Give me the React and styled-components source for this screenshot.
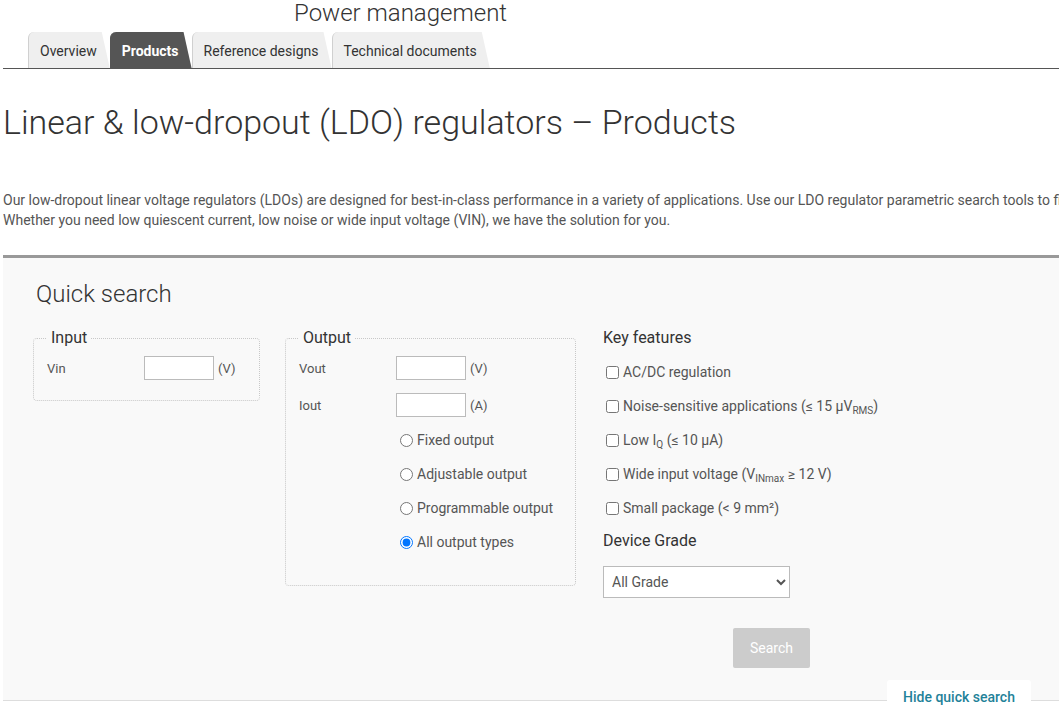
import styled, { createGlobalStyle } from "styled-components";

const Global = createGlobalStyle`
  html, body {
    margin: 0;
    padding: 0;
    background: #fff;
    font-family: Roboto, "Liberation Sans", Arial, sans-serif;
    overflow: hidden;
  }
`;

const tabs = ["Overview", "Products", "Reference designs", "Technical documents"];

const outputTypes = [
  "Fixed output",
  "Adjustable output",
  "Programmable output",
  "All output types",
];

const App = () => {
  return (
    <Page>
      <Global />
      <Family>Power management</Family>
      <Tabs>
        {tabs.map((t) => (
          <Tab key={t} active={t === "Products"}>
            {t}
          </Tab>
        ))}
      </Tabs>

      <Title>Linear &amp; low-dropout (LDO) regulators – Products</Title>

      <Intro>
        Our low-dropout linear voltage regulators (LDOs) are designed for
        best-in-class performance in a variety of applications. Use our LDO
        regulator parametric search tools to find the right device for your design.
        <br />
        Whether you need low quiescent current, low noise or wide input voltage
        (VIN), we have the solution for you.
      </Intro>

      <Panel>
        <PanelTitle>Quick search</PanelTitle>
        <Columns>
          <Group width={227} bottom={20}>
            <legend>Input</legend>
            <FieldRow>
              <FieldLabel>Vin</FieldLabel>
              <NumInput type="text" />
              <Unit>(V)</Unit>
            </FieldRow>
          </Group>

          <Group width={291} bottom={26} gapRight={27}>
            <legend>Output</legend>
            <FieldRow>
              <FieldLabel>Vout</FieldLabel>
              <NumInput type="text" />
              <Unit>(V)</Unit>
            </FieldRow>
            <FieldRow gap={13}>
              <FieldLabel>Iout</FieldLabel>
              <NumInput type="text" />
              <Unit>(A)</Unit>
            </FieldRow>
            <RadioList>
              {outputTypes.map((o) => (
                <Choice key={o}>
                  <input
                    type="radio"
                    name="otype"
                    defaultChecked={o === "All output types"}
                  />
                  <span>{o}</span>
                </Choice>
              ))}
            </RadioList>
          </Group>

          <Features>
            <Heading>Key features</Heading>
            <CheckList>
              <Choice>
                <input type="checkbox" />
                <span>AC/DC regulation</span>
              </Choice>
              <Choice>
                <input type="checkbox" />
                <span>
                  Noise-sensitive applications (≤ 15 μV<sub>RMS</sub>)
                </span>
              </Choice>
              <Choice>
                <input type="checkbox" />
                <span>
                  Low I<sub>Q</sub> (≤ 10 μA)
                </span>
              </Choice>
              <Choice>
                <input type="checkbox" />
                <span>
                  Wide input voltage (V<sub>INmax</sub> ≥ 12 V)
                </span>
              </Choice>
              <Choice>
                <input type="checkbox" />
                <span>Small package (&lt; 9 mm²)</span>
              </Choice>
            </CheckList>
            <Heading top={6}>Device Grade</Heading>
            <Select defaultValue="all">
              <option value="all">All Grade</option>
              <option value="auto">Automotive</option>
              <option value="cat">Catalog</option>
            </Select>
            <SearchButton>Search</SearchButton>
          </Features>
        </Columns>
        <HideTab>Hide quick search</HideTab>
      </Panel>
    </Page>
  );
};

export default App;

const Page = styled.div`
  width: 1056px;
  margin-left: 3px;
  padding-bottom: 25px;
  color: #333;
`;

const Family = styled.div`
  padding-left: 291px;
  font-size: 24px;
  font-weight: 300;
  line-height: 26px;
  color: #333;
`;

const Tabs = styled.div`
  display: flex;
  gap: 0;
  margin-top: 6px;
  padding-left: 25px;
  border-bottom: 1px solid #555;
`;

const Tab = styled.div`
  height: 36px;
  display: flex;
  align-items: center;
  padding: 2px 13px 0 11px;
  font-size: 14px;
  font-weight: ${(p) => (p.active ? 700 : 400)};
  color: ${(p) => (p.active ? "#fff" : "#333")};
  background: ${(p) => (p.active ? "#555" : "#efefef")};
  border-left: 1px solid ${(p) => (p.active ? "#555" : "#d0d0d0")};
  border-radius: 6px 8px 0 0;
  clip-path: polygon(0 0, calc(100% - 8px) 0, 100% 100%, 0 100%);
  box-sizing: border-box;
`;

const Title = styled.h1`
  margin: 33px 0 0;
  font-size: 34px;
  font-weight: 300;
  line-height: 40px;
  color: #333;
  white-space: nowrap;
`;

const Intro = styled.p`
  margin: 48px 0 0;
  font-size: 14px;
  line-height: 20px;
  color: #555;
  white-space: nowrap;
  overflow: hidden;
`;

const Panel = styled.div`
  position: relative;
  margin-top: 25px;
  background: #f9f9f9;
  border-top: 3px solid #999;
  border-bottom: 1px solid #ddd;
  padding: 22px 30px 33px;
  height: 446px;
  box-sizing: border-box;
`;

const PanelTitle = styled.h2`
  margin: 0 0 0 3px;
  font-size: 24px;
  font-weight: 300;
  line-height: 28px;
  color: #333;
`;

const Columns = styled.div`
  display: flex;
  align-items: flex-start;
  margin-top: 20px;
`;

const Group = styled.fieldset`
  width: ${(p) => p.width}px;
  box-sizing: border-box;
  margin: 0 ${(p) => p.gapRight || 25}px 0 0;
  padding: 8px 12px ${(p) => p.bottom}px 13px;
  border: 1px dotted #c8c8c8;
  border-radius: 4px;

  legend {
    padding: 0 4px;
    font-size: 16px;
    line-height: 20px;
    color: #333;
  }
`;

const FieldRow = styled.div`
  display: flex;
  align-items: center;
  margin-top: ${(p) => p.gap || 0}px;
  height: 24px;
`;

const FieldLabel = styled.label`
  width: 97px;
  font-size: 13px;
  color: #555;
`;

const NumInput = styled.input`
  width: 70px;
  height: 24px;
  box-sizing: border-box;
  border: 1px solid #bbb;
  background: #fff;
  margin: 0 4px 0 0;
  padding: 2px 4px;
  outline: none;
`;

const Unit = styled.span`
  font-size: 13px;
  color: #555;
`;

const RadioList = styled.div`
  display: flex;
  flex-direction: column;
  margin: 6px 0 0 98px;
`;

const Choice = styled.label`
  display: flex;
  align-items: center;
  height: 34px;
  font-size: 14px;
  color: #555;
  white-space: nowrap;

  input {
    width: 13px;
    height: 13px;
    margin: 0 4px 0 3px;
  }

  sub {
    font-size: 10px;
    vertical-align: -3px;
    line-height: 0;
  }
`;

const Features = styled.div`
  display: flex;
  flex-direction: column;
  align-items: flex-start;
  width: 336px;
`;

const Heading = styled.div`
  margin-top: ${(p) => p.top || 0}px;
  font-size: 16px;
  line-height: 20px;
  color: #333;
`;

const CheckList = styled.div`
  display: flex;
  flex-direction: column;
  margin-top: 7px;
`;

const Select = styled.select`
  margin-top: 15px;
  width: 187px;
  height: 32px;
  border: 1px solid #bbb;
  border-radius: 0;
  background: #fff;
  padding: 0 4px;
  font-family: Roboto, "Liberation Sans", Arial, sans-serif;
  font-size: 14px;
  color: #555;
`;

const SearchButton = styled.button`
  margin: 30px 0 0 130px;
  width: 77px;
  height: 40px;
  border: none;
  border-radius: 2px;
  background: #ccc;
  color: #fff;
  font-family: Roboto, "Liberation Sans", Arial, sans-serif;
  font-size: 14px;
`;

const HideTab = styled.div`
  position: absolute;
  right: 28px;
  bottom: -20px;
  width: 144px;
  height: 40px;
  box-sizing: border-box;
  padding-top: 9px;
  background: #fff;
  border-radius: 3px 3px 0 0;
  text-align: center;
  font-size: 14px;
  font-weight: 500;
  color: #1f8299;
`;
